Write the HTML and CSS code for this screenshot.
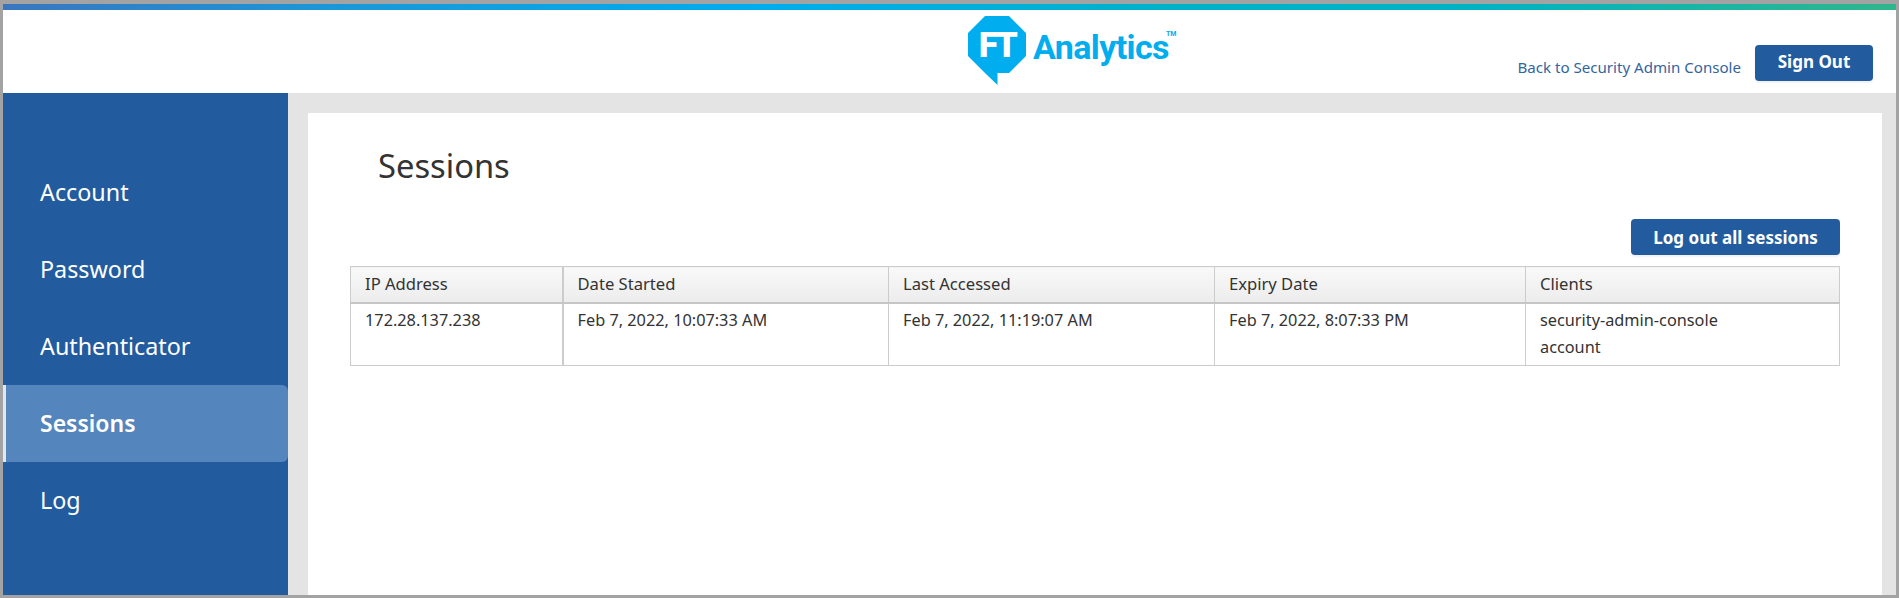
FILE: index.html
```html
<!DOCTYPE html>
<html lang="en">
<head>
<meta charset="utf-8">
<title>Sessions</title>
<link rel="stylesheet" href="styles.css">
</head>
<body>
<div class="frame">
  <div class="rainbow"></div>
  <header class="header">
    <div class="logo">
      <svg class="logo-mark" viewBox="0 0 58 69" width="58" height="69" aria-hidden="true">
        <path d="M17 0H41L58 17V40L41 57H29.5V69L17 57L0 40V17Z" fill="#00adef"/>
      </svg>
      <span class="logo-ft">FT</span>
      <span class="logo-name">Analytics</span>
      <span class="logo-tm">TM</span>
    </div>
    <div class="header-actions">
      <a class="back-link" href="#">Back to Security Admin Console</a>
      <a class="btn btn-signout" href="#">Sign Out</a>
    </div>
  </header>
  <div class="body">
    <nav class="sidebar">
      <a class="nav-item" href="#">Account</a>
      <a class="nav-item" href="#">Password</a>
      <a class="nav-item" href="#">Authenticator</a>
      <a class="nav-item active" href="#">Sessions</a>
      <a class="nav-item" href="#">Log</a>
    </nav>
    <main class="main">
      <section class="card">
        <h1 class="title">Sessions</h1>
        <div class="toolbar"><button class="btn btn-logout" type="button">Log out all sessions</button></div>
        <table class="sessions">
          <thead>
            <tr>
              <th class="c1">IP Address</th>
              <th class="c2">Date Started</th>
              <th class="c3">Last Accessed</th>
              <th class="c4">Expiry Date</th>
              <th class="c5">Clients</th>
            </tr>
          </thead>
          <tbody>
            <tr>
              <td class="c1">172.28.137.238</td>
              <td>Feb 7, 2022, 10:07:33 AM</td>
              <td>Feb 7, 2022, 11:19:07 AM</td>
              <td>Feb 7, 2022, 8:07:33 PM</td>
              <td><div>security-admin-console</div><div>account</div></td>
            </tr>
          </tbody>
        </table>
      </section>
    </main>
  </div>
</div>
</body>
</html>
```
FILE: styles.css
```css
* { box-sizing: border-box; }
html, body { margin: 0; height: 100%; }
body { font-family: "Noto Sans", sans-serif; color: #333; background: #a3a3a3; overflow: hidden; }
.frame {
  height: 598px;
  padding: 4px 3px 3px 3px;
  display: flex;
  flex-direction: column;
}
.rainbow {
  height: 6px;
  flex: none;
  background: linear-gradient(90deg, #3a76bf 0%, #1a97d8 17%, #00adee 40%, #00b2c8 62%, #00b3c3 78%, #2fb68c 100%);
}
.header {
  height: 83px;
  flex: none;
  background: #fff;
  display: flex;
  justify-content: flex-end;
  position: relative;
  padding: 35px 23px 0 0;
}
.logo { position: absolute; left: 965px; top: 6px; width: 210px; height: 69px; }
.logo-mark { display: block; }
.logo-ft {
  position: absolute; left: 7px; top: 10px; width: 44px; text-align: center;
  font: 900 35px/40px Roboto, sans-serif; color: #fff; letter-spacing: -2.5px;
}
.logo-name {
  position: absolute; left: 65px; top: 12px;
  font: 700 34px/38px Roboto, sans-serif; color: #00adef; letter-spacing: -0.6px;
}
.logo-tm {
  position: absolute; left: 198px; top: 14px;
  font: 700 7px/9px Roboto, sans-serif; color: #00adef;
}
.header-actions { display: flex; align-items: flex-start; gap: 14px; }
.back-link { font-size: 15.1px; line-height: 20px; color: #33659f; text-decoration: none; margin-top: 12px; }
.btn {
  display: block;
  background: #225c9e;
  color: #fff;
  font-family: "Noto Sans", sans-serif;
  font-weight: 700;
  font-size: 17px;
  text-align: center;
  text-decoration: none;
  border: 0;
  border-radius: 4px;
  box-shadow: 0 2px 2px rgba(0,0,0,.06);
}
.btn-signout { width: 118px; height: 36px; line-height: 33px; }
.body { flex: 1; display: flex; min-height: 0; background: #e4e4e4; }
.sidebar {
  width: 285px;
  flex: none;
  background: #225c9e;
  padding-top: 61px;
  display: flex;
  flex-direction: column;
}
.nav-item {
  height: 77px;
  line-height: 77px;
  padding-left: 37px;
  color: #fff;
  font-size: 23.3px;
  text-decoration: none;
}
.nav-item.active {
  background: #5585bd;
  font-size: 23px;
  font-weight: 600;
  border-left: 3px solid #dfe8f2;
  padding-left: 34px;
  border-radius: 0 6px 6px 0;
}
.main { flex: 1; padding: 20px 14px 0 20px; min-width: 0; }
.card { background: #fff; height: 100%; padding: 32px 42px 0 42px; }
.title { margin: 0 0 0 28px; font-size: 32.7px; font-weight: 400; line-height: 41px; color: #333; }
.toolbar { display: flex; justify-content: flex-end; margin-top: 33px; }
.btn-logout { width: 209px; height: 36px; line-height: 33px; cursor: pointer; }
.sessions {
  margin-top: 11px;
  width: 1490px;
  table-layout: fixed;
  border-collapse: collapse;
  font-size: 16.3px;
  color: #333;
}
.sessions th, .sessions td { border: 1px solid #ccc; padding: 0 14px; text-align: left; vertical-align: top; }
.sessions th {
  height: 36px;
  line-height: 34px;
  font-weight: 400;
  font-size: 16.6px;
  background: linear-gradient(#f9f9f9, #ececec);
  border-bottom: 2px solid #c6c6c6;
}
.sessions td { height: 63px; padding-top: 3px; padding-bottom: 3px; line-height: 27px; }
.sessions .c1 { width: 212px; border-right-width: 2px; }
.sessions .c2 { width: 326px; }
.sessions .c3 { width: 326px; }
.sessions .c4 { width: 311px; }
```
